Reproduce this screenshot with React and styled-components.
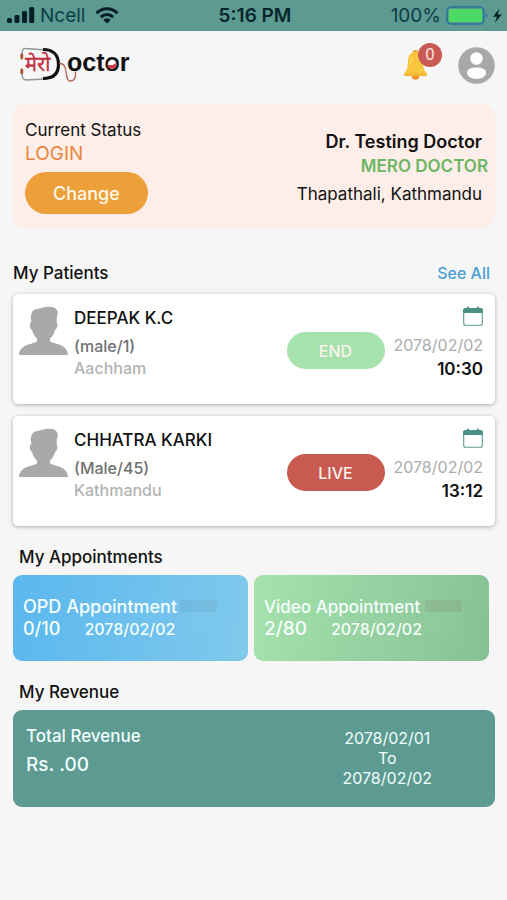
import React from "react";
import styled, { createGlobalStyle } from "styled-components";

const GlobalStyle = createGlobalStyle`
  * {
    box-sizing: border-box;
  }

  body {
    margin: 0;
    background: #f6f6f6;
    color: #111111;
    font-family: Inter, "Noto Sans", sans-serif;
    font-size: 17px;
    line-height: 24px;
  }

  h2, h3, p {
    margin: 0;
    font-size: inherit;
    font-weight: inherit;
  }

  svg {
    display: block;
    flex: none;
  }
`;

const StatusBar = styled.div`
  display: grid;
  grid-template-columns: 1fr auto 1fr;
  align-items: center;
  height: 31px;
  padding: 0 4px 0 7px;
  background: #5d9a92;
  color: #07272c;
  font-size: 19px;
`;

const StatusGroup = styled.div`
  display: flex;
  align-items: center;
  justify-content: ${(props) => (props.$end ? "flex-end" : "flex-start")};
  gap: 5px;
  color: #0c3d48;
`;

const Clock = styled.div`
  font-weight: 600;
`;

const Header = styled.header`
  display: flex;
  align-items: center;
  justify-content: space-between;
  padding: 14px 12px 19px 18px;
`;

const HeaderActions = styled.div`
  display: flex;
  align-items: center;
  gap: 30px;
`;

const IconButton = styled.button`
  position: relative;
  padding: 0;
  border: 0;
  background: none;
  cursor: pointer;
`;

const Badge = styled.span`
  position: absolute;
  top: -6px;
  right: -14px;
  width: 24px;
  height: 24px;
  border-radius: 50%;
  background: #c95a54;
  color: #ffe9e4;
  font-size: 16px;
  line-height: 24px;
  text-align: center;
`;

const Page = styled.main`
  padding: 0 12px 24px 13px;
`;

const DoctorCard = styled.section`
  display: flex;
  justify-content: space-between;
  padding: 14px 7px 14px 12px;
  border-radius: 12px;
  background: #fdeee9;
`;

const DoctorInfo = styled.div`
  padding-top: 12px;
  text-align: right;
`;

const DoctorLine = styled.p`
  padding-right: 6px;
`;

const DoctorName = styled(DoctorLine)`
  font-size: 18px;
  font-weight: 600;
`;

const Company = styled.p`
  margin-bottom: 4px;
  color: #6cb663;
  font-weight: 600;
`;

const LoginState = styled.p`
  color: #e9863c;
  font-size: 19px;
`;

const ChangeButton = styled.button`
  height: 42px;
  margin-top: 6px;
  padding: 0 28px;
  border: 0;
  border-radius: 21px;
  background: #ed9f39;
  color: #fff8e8;
  font-family: inherit;
  font-size: 18px;
  font-weight: 500;
  cursor: pointer;
`;

const SectionHeader = styled.div`
  display: flex;
  justify-content: space-between;
  margin: 33px 5px 9px 0;
`;

const SectionTitle = styled.h2`
  font-weight: 500;
`;

const SubTitle = styled(SectionTitle)`
  margin: 19px 0 6px 6px;
`;

const SeeAll = styled.a`
  color: #4c9dd6;
  font-size: 16px;
  font-weight: 500;
  text-decoration: none;
`;

const PatientList = styled.div`
  display: flex;
  flex-direction: column;
  gap: 12px;
`;

const PatientCard = styled.article`
  display: flex;
  align-items: flex-start;
  padding: 12px 12px 23px 6px;
  border-radius: 5px;
  background: #ffffff;
  box-shadow: 0 1px 4px rgba(0, 0, 0, 0.3);
`;

const PatientInfo = styled.div`
  flex: 1;
  margin-left: 6px;
  color: #b3b3b3;
  font-size: 16px;
  font-weight: 500;
  line-height: 22px;
`;

const PatientName = styled.h3`
  margin-bottom: 5px;
  color: #111111;
  font-size: 17px;
  font-weight: 500;
  line-height: 24px;
`;

const PatientMeta = styled.p`
  color: #707070;
`;

const StateButton = styled.button`
  width: 98px;
  height: 37px;
  margin: 26px 9px 0 0;
  border: 0;
  border-radius: 19px;
  background: ${(props) => (props.$live ? "#c95a52" : "#a5e2ac")};
  color: #fbf3ee;
  font-family: inherit;
  font-size: 16px;
  font-weight: 500;
  cursor: pointer;
`;

const Schedule = styled.div`
  display: flex;
  flex-direction: column;
  align-items: flex-end;
`;

const VisitDate = styled.p`
  margin-top: 6px;
  color: #acacac;
  font-size: 16px;
`;

const VisitTime = styled.p`
  font-weight: 600;
`;

const AppointmentGrid = styled.div`
  display: grid;
  grid-template-columns: 1fr 1fr;
  gap: 6px;
  padding-right: 6px;
`;

const AppointmentCard = styled.article`
  display: flex;
  gap: 3px;
  padding: 21px 10px;
  border-radius: 9px;
  background: linear-gradient(100deg, ${(props) => props.$from}, ${(props) => props.$to});
  color: #f5fffb;
  font-weight: 500;
  line-height: 22px;
  white-space: nowrap;
`;

const AppointmentTitle = styled.h3`
  font-size: ${(props) => (props.$video ? "17px" : "18px")};
`;

const AppointmentRow = styled.div`
  display: flex;
  align-items: center;
  gap: 24px;
  font-size: 16px;
`;

const Count = styled.span`
  font-size: ${(props) => (props.$video ? "19px" : "18px")};
`;

const RevenueCard = styled.section`
  display: flex;
  justify-content: space-between;
  padding: 14px 63px 15px 13px;
  border-radius: 9px;
  background: #5d9a92;
  color: #f0fffb;
`;

const RevenueTotal = styled.div`
  font-weight: 500;
`;

const Amount = styled.p`
  margin-top: 5px;
  font-size: 19px;
`;

const RevenueRange = styled.div`
  padding: 4px 0;
  font-size: 16px;
  line-height: 20px;
  text-align: center;
`;

const Signal = () => (
  <svg width="28" height="17" viewBox="0 0 28 17" fill="#061f27">
    <rect x="0" y="11" width="5" height="5" rx="1.5" />
    <rect x="7.5" y="8" width="5" height="8" rx="1.5" />
    <rect x="15" y="4" width="5" height="12" rx="1.5" />
    <rect x="22.2" y="0" width="5" height="16" rx="1.5" />
  </svg>
);

const Wifi = () => (
  <svg width="32" height="17" viewBox="-5 0 32 17" fill="none" stroke="#061f27" strokeWidth="3">
    <path d="M1.5 6.2C7.5 .2 16.5 .2 22.5 6.2" />
    <path d="M5.8 10.2c3.8-3.5 8.6-3.5 12.4 0" />
    <path d="M8.4 12.9c2-1.8 5.2-1.8 7.2 0L12 16.6z" fill="#061f27" stroke="none" />
  </svg>
);

const Battery = () => (
  <svg width="57" height="20" viewBox="0 0 57 20">
    <rect x="1" y="1" width="37" height="17" rx="4.5" fill="none" stroke="#28739a" strokeWidth="1.6" />
    <rect x="3" y="3" width="33" height="13" rx="2" fill="#4cd964" />
    <path d="M40 7q3 2.5 0 5z" fill="#28739a" />
    <path d="M53.5 2.5L47 10.7h4l-2.2 6.1 7-8.2h-4.2z" fill="#061f27" />
  </svg>
);

const Logo = () => (
  <svg width="114" height="40" viewBox="0 2 114 40" role="img" aria-label="Mero Doctor">
    <g fill="none" strokeLinecap="round">
      <path d="M27 7L8 5.5Q4 5 4 11M27 36L8 37q-4 0-4-7" stroke="#8d9498" strokeWidth="1.3" />
      <path d="M3.8 12v3M3.8 27v3" stroke="#a9512d" strokeWidth="2.8" />
      <path d="M25 6.5c10 0 15.500 5.5 15.500 15S35 35.5 25 35.5" stroke="#111" strokeWidth="3.2" strokeLinecap="butt" />
      <path d="M42 20.5c9 0 4 17.500 10 17.500 5 0 6-4 5.500-9" stroke="#b56c5c" strokeWidth="1.4" />
    </g>
    <text x="7" y="28" fill="#c02f40" stroke="#c02f40" strokeWidth="0.3" fontFamily="Noto Sans, sans-serif" fontSize="20">मेरो</text>
    <text x="49" y="28" fill="#111" fontFamily="Liberation Sans, sans-serif" fontSize="25" fontWeight="bold">octor</text>
    <circle cx="94.1" cy="21.4" r="4.4" fill="#fff" />
    <path d="M89.7 21.4q4.500 2 8.800-2 .4 6.400-4.400 6.400-4 0-4.400-4.400z" fill="#cf3c49" />
  </svg>
);

const Bell = () => (
  <svg width="25" height="32" viewBox="0 0 25 32">
    <circle cx="12.5" cy="4" r="3" fill="#e9a02f" />
    <circle cx="12.5" cy="27" r="3.8" fill="#f19830" />
    <path d="M12.5 3C7.5 3 5 7 5 12c0 6-1 9-3.5 12-1 1.400-.4 3 1.500 3h19c1.900 0 2.500-1.600 1.500-3C21 21 20 18 20 12c0-5-2.500-9-7.500-9z" fill="#f8c63d" />
    <path d="M1.2 24.5h22.600q.5 2.500-1.800 2.500H3q-2.300 0-1.800-2.500z" fill="#f4b638" />
    <path d="M9 8q-1.500 3-1.500 8" fill="none" stroke="#ffd966" strokeWidth="1.5" />
  </svg>
);

const Profile = () => (
  <svg width="37" height="37" viewBox="0 0 37 37">
    <circle cx="18.5" cy="18.5" r="18.3" fill="#a8a8a8" />
    <circle cx="18.5" cy="11.5" r="6.3" fill="#fff" />
    <path d="M9 26c0-4 4-5.500 9.500-5.500S28 22 28 26c0 3-4.500 6-9.500 6S9 29 9 26z" fill="#fff" />
  </svg>
);

const Avatar = () => (
  <svg width="49" height="50" viewBox="0 0 49 50" fill="#a9a9a9">
    <path d="M12.500 16C11 10 12 4 18 3c4 0 6-2.300 13-2.200 5 0 8 3.200 7.800 6.200 0 2-1.200 3-1 5v5c1.500 1 .4 6-1.800 7-1 4-3 7-5 8.500v3C36 38.500 48 37.500 49 49H0C1 37.500 14 38.500 18 35.500v-3c-2-1.500-4-4.500-5-8.500-2.200-1-3.300-7-.5-8z" />
  </svg>
);

const CalendarIcon = () => (
  <svg width="20" height="21" viewBox="0 0 20 21">
    <rect x=".7" y="3" width="18.6" height="16.3" rx="2" fill="none" stroke="#5d9a92" strokeWidth="1.1" />
    <path d="M0 7V4.5Q0 2 2.500 2H4V1q1-1 2 0v1h8V1q1-1 2 0v1h1.500Q20 2 20 4.500V7z" fill="#4c8f86" />
  </svg>
);

const FaintCalendar = ({ tint }) => (
  <svg width="37" height="40" viewBox="0 0 37 40">
    <path d="M0 16V6q0-2 2-2h33q2 0 2 2v10z" fill={tint} opacity="0.18" />
    <path d="M0 16h37v20q0 2-2 2H2q-2 0-2-2z" fill="#fff" opacity="0.02" />
    <path d="M17 20h4m4 0h4M9 26h4m4 0h4m4 0h4M9 32h4m4 0h4" stroke="#fff" strokeWidth="3" opacity="0.02" />
  </svg>
);

const patients = [
  { name: "DEEPAK K.C", meta: "(male/1)", address: "Aachham", state: "END", date: "2078/02/02", time: "10:30" },
  { name: "CHHATRA KARKI", meta: "(Male/45)", address: "Kathmandu", state: "LIVE", date: "2078/02/02", time: "13:12" },
];

const appointments = [
  { title: "OPD Appointment", count: "0/10", date: "2078/02/02", from: "#5ab7ef", to: "#80c9eb", tint: "#648fa8" },
  { title: "Video Appointment", count: "2/80", date: "2078/02/02", from: "#a5e2ac", to: "#86c196", tint: "#8a7a68", video: true },
];

const Patient = (props) => {
  const { patient } = props;
  return (
    <PatientCard>
      <Avatar />
      <PatientInfo>
        <PatientName>{patient.name}</PatientName>
        <PatientMeta>{patient.meta}</PatientMeta>
        <p>{patient.address}</p>
      </PatientInfo>
      <StateButton $live={patient.state === "LIVE"}>{patient.state}</StateButton>
      <Schedule>
        <CalendarIcon />
        <VisitDate>{patient.date}</VisitDate>
        <VisitTime>{patient.time}</VisitTime>
      </Schedule>
    </PatientCard>
  );
};

const App = () => {
  return (
    <>
      <GlobalStyle />
      <StatusBar>
        <StatusGroup>
          <Signal />
          <span>Ncell</span>
          <Wifi />
        </StatusGroup>
        <Clock>5:16 PM</Clock>
        <StatusGroup $end>
          <span>100%</span>
          <Battery />
        </StatusGroup>
      </StatusBar>
      <Header>
        <Logo />
        <HeaderActions>
          <IconButton aria-label="Notifications">
            <Bell />
            <Badge>0</Badge>
          </IconButton>
          <IconButton aria-label="Profile">
            <Profile />
          </IconButton>
        </HeaderActions>
      </Header>
      <Page>
        <DoctorCard>
          <div>
            <p>Current Status</p>
            <LoginState>LOGIN</LoginState>
            <ChangeButton>Change</ChangeButton>
          </div>
          <DoctorInfo>
            <DoctorName>Dr. Testing Doctor</DoctorName>
            <Company>MERO DOCTOR</Company>
            <DoctorLine>Thapathali, Kathmandu</DoctorLine>
          </DoctorInfo>
        </DoctorCard>

        <SectionHeader>
          <SectionTitle>My Patients</SectionTitle>
          <SeeAll href="#patients">See All</SeeAll>
        </SectionHeader>
        <PatientList>
          {patients.map((patient) => (
            <Patient key={patient.name} patient={patient} />
          ))}
        </PatientList>

        <SubTitle>My Appointments</SubTitle>
        <AppointmentGrid>
          {appointments.map((item) => (
            <AppointmentCard key={item.title} $from={item.from} $to={item.to}>
              <div>
                <AppointmentTitle $video={item.video}>{item.title}</AppointmentTitle>
                <AppointmentRow>
                  <Count $video={item.video}>{item.count}</Count>
                  <span>{item.date}</span>
                </AppointmentRow>
              </div>
              <FaintCalendar tint={item.tint} />
            </AppointmentCard>
          ))}
        </AppointmentGrid>

        <SubTitle>My Revenue</SubTitle>
        <RevenueCard>
          <RevenueTotal>
            <p>Total Revenue</p>
            <Amount>Rs. .00</Amount>
          </RevenueTotal>
          <RevenueRange>
            <p>2078/02/01</p>
            <p>To</p>
            <p>2078/02/02</p>
          </RevenueRange>
        </RevenueCard>
      </Page>
    </>
  );
};

export default App;
